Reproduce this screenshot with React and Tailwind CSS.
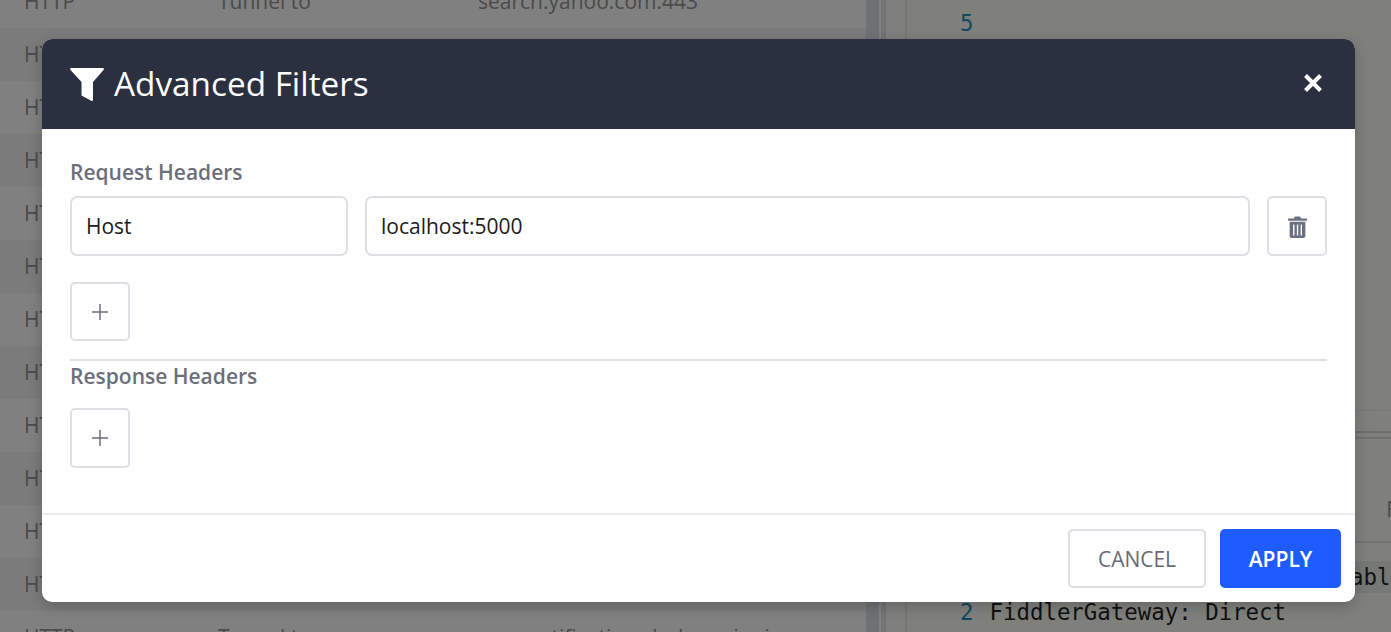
import React from "react";

const rows = Array.from({ length: 13 });

function Funnel() {
  return (
    <svg viewBox="0 0 34 33" className="w-[34px] h-[33px] shrink-0" fill="#fff">
      <path d="M1.500 0h31c1.300 0 1.800 1.200 1 2L23 14V31.500c0 1.200-.8 1.800-1.800 1.200L11.500 27.500V14L.5 2C-.3 1.200.2 0 1.500 0z" />
    </svg>
  );
}

function Trash() {
  return (
    <svg viewBox="0 0 18 21" className="w-[19px] h-[22px] ml-[1px] mt-[1px]" fill="#6b7080">
      <path d="M0 2.500h5.500L6.500.5h5l1 2H18v2H0z" />
      <path fillRule="evenodd" d="M1.500 5.500h15V19a2 2 0 0 1-1.500 2H3a2 2 0 0 1-1.500-2zM4.800 8v10.500h1.300V8zM8.400 8v10.500h1.300V8zM12 8v10.500h1.300V8z" />
    </svg>
  );
}

function Plus() {
  return (
    <svg viewBox="0 0 16 16" className="w-4 h-4" fill="none" stroke="#6b7080" strokeWidth="1.500">
      <path d="M8 0v16M0 8h16" />
    </svg>
  );
}

function IconBox({ children, className }) {
  return (
    <button className={`w-[60px] shrink-0 flex items-center justify-center bg-white border-2 border-[#dde1e5] rounded-[5px] ${className}`}>
      {children}
    </button>
  );
}

function Field({ value, className }) {
  return (
    <div className={`h-[60px] flex items-center px-[14px] pt-[1px] border-2 border-[#dde1e5] rounded-[7px] text-[21px] text-[#1c1c1c] ${className}`}>
      {value}
    </div>
  );
}

export default function App() {
  return (
    <div className="relative w-[1391px] h-[632px] overflow-hidden bg-[#808080] font-['Open_Sans',sans-serif]">
      <div className="flex h-full">
        <div className="w-[866px] h-full shrink-0 -mt-[25px] text-[21px] text-[#4a4a4a]">
          {rows.map((_, i) => (
            <div key={i} className={`h-[53px] flex items-center pl-6 ${i % 2 ? "bg-[#7b7b7b]" : "bg-[#808080]"}`}>
              <span className="w-[194px] shrink-0">HTTP</span>
              {i === 0 && <span className="w-[260px] shrink-0">Tunnel to</span>}
              {i === 0 && <span>search.yahoo.com:443</span>}
              {i === 12 && <span className="w-[308px] shrink-0">Tunnel to</span>}
              {i === 12 && <span>notifications.bubamainpipe.com</span>}
            </div>
          ))}
        </div>
        <div className="w-[13px] h-full bg-[#6f7274] shrink-0" />
        <div className="w-[2px] h-full bg-[#808080] shrink-0" />
        <div className="w-[5px] h-full bg-[#727575] shrink-0" />
        <div className="w-[19px] h-full bg-[#7f807c] shrink-0" />
        <div className="w-[2px] h-full bg-[#737675] shrink-0" />
        <div className="flex-1 h-full flex flex-col bg-[#7f807c] font-['DejaVu_Sans_Mono',monospace] text-[22.4px] text-[#111]">
          <div className="h-[410px] shrink-0 pt-[8px] pl-[53px] text-[#15485f] leading-[30px]">5</div>
          <div className="h-[1px] bg-[#767876] shrink-0" />
          <div className="h-[20px] shrink-0" />
          <div className="h-[2px] bg-[#6a6d6b] shrink-0" />
          <div className="h-[4px] shrink-0" />
          <div className="h-[2px] bg-[#6f7270] shrink-0" />
          <div className="h-[102px] shrink-0 flex items-end justify-end pb-[16px] font-['Open_Sans',sans-serif] text-[21px] text-[#4a4a4a]">
            <span className="mr-[-6px]">F</span>
          </div>
          <div className="h-[2px] bg-[#6f7270] shrink-0" />
          <div className="h-[18px] shrink-0" />
          <div className="h-[32px] shrink-0 bg-[#767876] flex items-center justify-end overflow-hidden leading-none">
            <span className="mr-[-13px]">able</span>
          </div>
          <div className="flex items-center pl-[53px] leading-[30px] mt-[4px]">
            <span className="text-[#15485f] mr-[16px]">2</span>FiddlerGateway: Direct
          </div>
        </div>
      </div>

      <div className="absolute left-[42px] top-[39px] w-[1313px] h-[563px] bg-white rounded-[10px] flex flex-col overflow-hidden shadow-[0_4px_14px_rgba(0,0,0,0.22)]">
        <div className="h-[90px] shrink-0 bg-[#2b3040] flex items-center pl-[28px] pr-[32px] text-white">
          <Funnel />
          <span className="ml-[10px] text-[33.3px] leading-none">Advanced Filters</span>
          <svg viewBox="0 0 20 20" className="ml-auto w-5 h-5 -mt-[2px]" fill="none" stroke="#fff" strokeWidth="4">
            <path d="M2.500 2.500l15 15M17.500 2.500l-15 15" />
          </svg>
        </div>

        <div className="flex-1 px-[28px] pt-[29px]">
          <div className="text-[21px] font-semibold leading-[28px] text-[#6c6f7b]">Request Headers</div>
          <div className="flex gap-[17px] mt-[10px]">
            <Field value="Host" className="w-[278px]" />
            <Field value="localhost:5000" className="flex-1" />
            <IconBox className="h-[60px]"><Trash /></IconBox>
          </div>
          <div className="mt-[26px]"><IconBox className="h-[59px]"><Plus /></IconBox></div>
          <div className="h-[2px] bg-[#dde1e5] mt-[18px]" />
          <div className="text-[21px] font-semibold leading-[28px] text-[#6c6f7b] mt-[1px]">Response Headers</div>
          <div className="mt-[18px]"><IconBox className="h-[60px]"><Plus /></IconBox></div>
        </div>

        <div className="h-[89px] shrink-0 border-t-2 border-[#ececec] flex items-center justify-end gap-[14px] pr-[14px] pb-[1px]">
          <button className="w-[138px] h-[59px] pt-[3px] border-2 border-[#dde1e5] rounded-[5px] bg-white text-[21px] font-medium text-[#666a76]">CANCEL</button>
          <button className="w-[121px] h-[59px] pt-[3px] rounded-[5px] bg-[#1f5cff] text-[21px] font-semibold text-white">APPLY</button>
        </div>
      </div>
    </div>
  );
}
